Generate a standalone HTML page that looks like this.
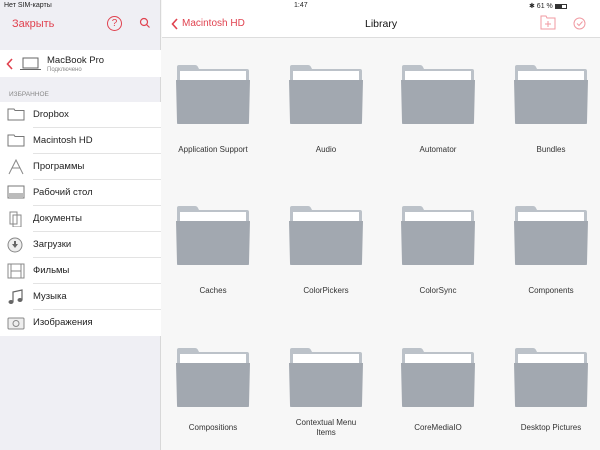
<!DOCTYPE html>
<html><head><meta charset="utf-8"><style>
*{margin:0;padding:0;box-sizing:border-box}
body{width:600px;height:450px;overflow:hidden;font-family:"Liberation Sans",sans-serif;background:#f7f7f7;position:relative}
.side{position:absolute;left:0;top:0;width:161px;height:450px;background:#efeff4;border-right:1px solid #d8d8d8}
.st{position:absolute;font-size:7px;color:#222}
.red{color:#e0424f}
.row{position:absolute;left:0;width:161px;height:26px;background:#fff}
.row span{position:absolute;left:33px;top:7px;font-size:9.5px;color:#222}
.row i{position:absolute;left:33px;right:0;bottom:0;border-bottom:1px solid #e3e3e3}
.ic{position:absolute;left:7px;top:5px}
.main{position:absolute;left:162px;top:0;right:0;height:38px;background:#fff;border-bottom:1px solid #ddd}
.f{position:absolute;width:74px}
.lab{position:absolute;width:110px;text-align:center;font-size:8px;color:#333;line-height:10px}
</style></head><body>
<div class="side">
 <div class="st" style="left:4px;top:2px">Нет SIM-карты ︎</div>
 <div class="red" style="position:absolute;left:12px;top:18px;font-size:11px">Закрыть</div>
 <div style="position:absolute;left:107px;top:16px;width:15px;height:15px;border:1px solid #e0424f;border-radius:50%;color:#e0424f;font-size:10px;text-align:center;line-height:13px">?</div>
 <svg style="position:absolute;left:139px;top:17px" width="12" height="12"><circle cx="5" cy="5" r="3.5" fill="none" stroke="#e0424f" stroke-width="1.2"/><line x1="7.5" y1="7.5" x2="10.5" y2="10.5" stroke="#e0424f" stroke-width="1.2"/></svg>
 <div class="row" style="top:50px;height:27px">
  <svg style="position:absolute;left:6px;top:8px" width="8" height="12"><path d="M6 1L1.5 6L6 11" fill="none" stroke="#e0424f" stroke-width="1.6"/></svg>
  <svg style="position:absolute;left:20px;top:7px" width="22" height="14"><rect x="3" y="1" width="15" height="10" fill="none" stroke="#666" stroke-width="1"/><line x1="0" y1="12.5" x2="21" y2="12.5" stroke="#666"/></svg>
  <div style="position:absolute;left:47px;top:5px;font-size:9.5px;color:#222">MacBook Pro</div>
  <div style="position:absolute;left:47px;top:17px;font-size:6px;color:#888">Подключено</div>
 </div>
 <div style="position:absolute;left:9px;top:91px;font-size:6.5px;color:#888">ИЗБРАННОЕ</div>
 <div class="row" style="top:102px"><svg class="ic" width="18" height="14"><path d="M1 2h6l1 1.5h9V13H1z" fill="none" stroke="#777"/></svg><span>Dropbox</span><i></i></div>
 <div class="row" style="top:128px"><svg class="ic" width="18" height="14"><path d="M1 2h6l1 1.5h9V13H1z" fill="none" stroke="#777"/></svg><span>Macintosh HD</span><i></i></div>
 <div class="row" style="top:154px"><svg class="ic" width="18" height="16"><path d="M2 15L9 1L16 15M5 9h8" fill="none" stroke="#888"/></svg><span>Программы</span><i></i></div>
 <div class="row" style="top:180px"><svg class="ic" width="18" height="14"><rect x="1" y="1" width="16" height="12" fill="none" stroke="#777"/><rect x="2" y="8" width="14" height="4" fill="#bbb"/></svg><span>Рабочий стол</span><i></i></div>
 <div class="row" style="top:206px"><svg class="ic" width="18" height="16"><path d="M3 1h7v12H3z M6 4h8v12H6z" fill="#fff" stroke="#888"/></svg><span>Документы</span><i></i></div>
 <div class="row" style="top:232px"><svg class="ic" width="18" height="16"><circle cx="8" cy="8" r="7" fill="#eee" stroke="#888"/><path d="M5 7h6l-3 4z M7 4h2v3H7z" fill="#666"/></svg><span>Загрузки</span><i></i></div>
 <div class="row" style="top:258px"><svg class="ic" width="18" height="16"><rect x="1" y="1" width="16" height="14" fill="none" stroke="#888"/><path d="M4 1v14M14 1v14M4 8h10" stroke="#888"/></svg><span>Фильмы</span><i></i></div>
 <div class="row" style="top:284px"><svg class="ic" width="18" height="16"><path d="M6 13V3l9-2v10" fill="none" stroke="#666" stroke-width="1.2"/><ellipse cx="4" cy="13" rx="2.5" ry="2" fill="#666"/><ellipse cx="13" cy="11" rx="2.5" ry="2" fill="#666"/></svg><span>Музыка</span><i></i></div>
 <div class="row" style="top:310px"><svg class="ic" width="18" height="16"><rect x="1" y="3" width="16" height="11" rx="1" fill="#eee" stroke="#888"/><circle cx="9" cy="8.5" r="3" fill="none" stroke="#888"/></svg><span>Изображения</span></div>
</div>
<div class="main">
 <div class="st" style="left:132px;top:2px">1:47</div>
 <div class="st" style="left:367px;top:2px">✱ 61 % <span style="display:inline-block;width:12px;height:5px;border:1px solid #333;vertical-align:middle;background:linear-gradient(90deg,#333 60%,#fff 60%)"></span></div>
 <svg style="position:absolute;left:9px;top:18px" width="8" height="12"><path d="M6 1L1.5 6L6 11" fill="none" stroke="#e0424f" stroke-width="1.6"/></svg>
 <div class="red" style="position:absolute;left:20px;top:18px;font-size:10px">Macintosh HD</div>
 <div style="position:absolute;left:203px;top:18px;font-size:10.5px;color:#111">Library</div>
 <svg style="position:absolute;left:378px;top:15px" width="16" height="15"><path d="M1 1h5l1 2h8v11H1z" fill="none" stroke="#f09aa2"/><path d="M8 6v6M5 9h6" stroke="#f09aa2"/></svg>
 <svg style="position:absolute;left:411px;top:17px" width="13" height="13"><circle cx="6.5" cy="6.5" r="5.5" fill="none" stroke="#f09aa2"/><path d="M4 6.5l2 2 3.5-4" fill="none" stroke="#f09aa2"/></svg>
</div>
<div style="position:absolute;left:162px;top:38px;width:438px;height:412px;background:#f7f7f7"></div>
<svg width="0" height="0" style="position:absolute"><defs><g id="fd"><path d="M1 3Q1 1 3 1H19Q21 1 22 3L23 5H71Q73 5 73 7V60H1z" fill="#bcc2c9"/><rect x="4" y="7" width="66" height="9" fill="#fff"/><path d="M0 16H74L73 58Q73 60 71 60H3Q1 60 1 58z" fill="#a2a8b0"/></g></defs></svg>
<div id="grid"></div>
<script>
var names=[["Application Support","Audio","Automator","Bundles"],["Caches","ColorPickers","ColorSync","Components"],["Compositions","Contextual Menu Items","CoreMediaIO","Desktop Pictures"]];
var xs=[176,289,401,514],ys=[64,205,347],ly=[145,286,423],h="";
for(var r=0;r<3;r++)for(var c=0;c<4;c++){
h+='<svg class="f" style="left:'+xs[c]+'px;top:'+ys[r]+'px" width="74" height="60"><use href="#fd"/></svg>';
var t=ly[r];if(names[r][c]=="Contextual Menu Items")t-=5;
h+='<div class="lab" style="left:'+(xs[c]-18)+'px;top:'+t+'px">'+(names[r][c]=="Contextual Menu Items"?"Contextual Menu<br>Items":names[r][c])+'</div>';}
document.getElementById("grid").innerHTML=h;
</script>
</body></html>
